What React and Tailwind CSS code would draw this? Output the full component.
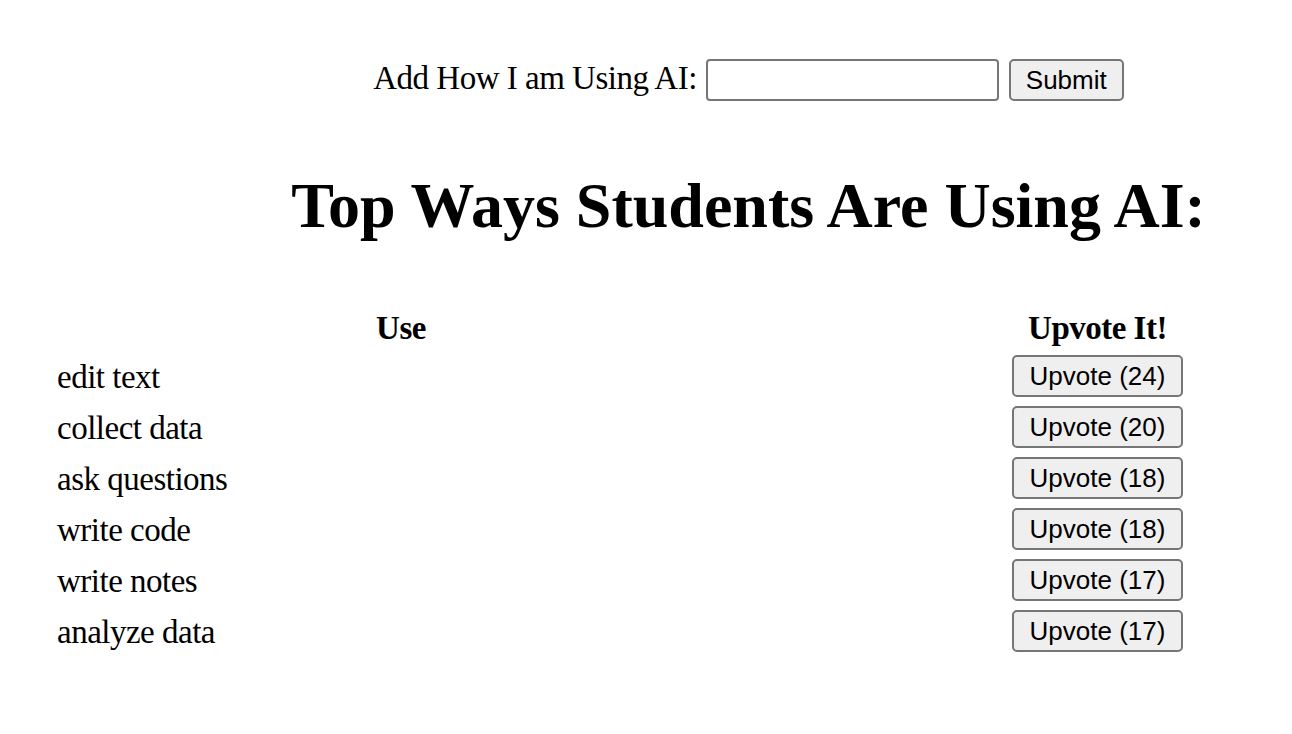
import { useState } from "react";

const initialUses = [
  { name: "edit text", votes: 24 },
  { name: "collect data", votes: 20 },
  { name: "ask questions", votes: 18 },
  { name: "write code", votes: 18 },
  { name: "write notes", votes: 17 },
  { name: "analyze data", votes: 17 },
];

const serif = "font-['Liberation_Serif','Times_New_Roman',serif]";
const buttonCls =
  "rounded-[5px] border-2 border-[#767676] bg-[#efefef] py-[4px] font-['Liberation_Sans',Arial,sans-serif] text-[26px] leading-[30px] tracking-normal text-black";

export default function App() {
  const [uses, setUses] = useState(initialUses);
  const [draft, setDraft] = useState("");

  const upvote = (i) => {
    setUses((prev) => prev.map((u, idx) => (idx === i ? { ...u, votes: u.votes + 1 } : u)));
  };

  const submit = (e) => {
    e.preventDefault();
    if (!draft.trim()) return;
    setUses((prev) => [...prev, { name: draft.trim(), votes: 0 }]);
    setDraft("");
  };

  return (
    <div className={`min-h-screen bg-white text-black ${serif}`}>
      {/* add form */}
      <form
        onSubmit={submit}
        className="flex items-center justify-center pl-[205px] pt-[59px]"
      >
        <label className="pb-[5px] text-[33px] leading-[36px] tracking-[-0.5px]">
          Add How I am Using AI:
        </label>
        <input
          value={draft}
          onChange={(e) => setDraft(e.target.value)}
          className="ml-[9px] h-[42px] w-[293px] rounded-[4px] border-2 border-[#767676] bg-white px-2 text-[26px] outline-none"
        />
        <button type="submit" className={`ml-[10px] px-[15px] ${buttonCls}`}>
          Submit
        </button>
      </form>

      <h1 className="mt-[73px] pl-[205px] text-center text-[64px] font-bold leading-[64px]">
        Top Ways Students Are Using AI:
      </h1>

      {/* table */}
      <div className="mt-[64px] grid grid-cols-[688px_179px] gap-x-[263px] pl-[57px] text-[33px] tracking-[-0.5px]">
        <div className="h-[48px] pt-[2px] text-center font-bold leading-[48px]">Use</div>
        <div className="h-[48px] pt-[2px] text-center font-bold leading-[48px]">Upvote It!</div>
        {uses.map((u, i) => (
          <div key={i} className="contents">
            <div className="h-[51px] pt-[2px] leading-[51px]">{u.name}</div>
            <div className="flex h-[51px] items-center justify-center">
              <button onClick={() => upvote(i)} className={`px-[16px] ${buttonCls}`}>
                Upvote ({u.votes})
              </button>
            </div>
          </div>
        ))}
      </div>
    </div>
  );
}
